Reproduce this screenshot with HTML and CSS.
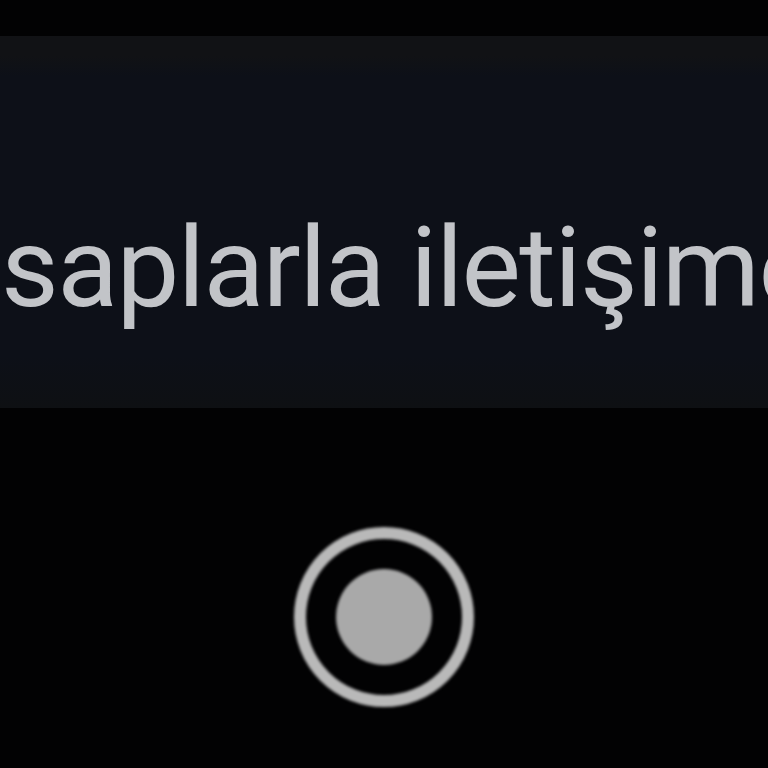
FILE: index.html
```html
<!DOCTYPE html>
<html lang="tr">
<head>
<meta charset="utf-8">
<link rel="stylesheet" href="styles.css">
</head>
<body>
  <div class="screen">
    <div class="banner">
      <p class="banner-text">saplarla iletişime</p>
    </div>
    <div class="nav">
      <svg class="home" viewBox="0 0 184 184" width="184" height="184" aria-hidden="true">
        <circle cx="92" cy="92" r="84" fill="none" stroke="#b9b9b9" stroke-width="12"/>
        <circle cx="92" cy="92" r="48" fill="#a9a9a9"/>
      </svg>
    </div>
  </div>
</body>
</html>
```
FILE: styles.css
```css
html, body {
  margin: 0;
  padding: 0;
  background: #020203;
}
.screen {
  width: 768px;
  height: 768px;
  overflow: hidden;
  display: flex;
  flex-direction: column;
}
.banner {
  margin-top: 36px;
  height: 372px;
  box-sizing: border-box;
  padding-top: 174px;
  background: linear-gradient(to bottom, #111215 0px, #111215 20px, #0d1018 40px, #0d1018 320px, #0e1013 372px);
  overflow: hidden;
}
.banner-text {
  margin: 0;
  padding-left: 1px;
  white-space: nowrap;
  font-family: Roboto, "Noto Sans", sans-serif;
  font-size: 112px;
  line-height: 116px;
  color: #c2c4c8;
  letter-spacing: -1.6px;
  filter: blur(0.6px);
}
.nav {
  display: flex;
  justify-content: center;
  padding-top: 117px;
}
.home {
  display: block;
  filter: blur(1.5px);
}
```
